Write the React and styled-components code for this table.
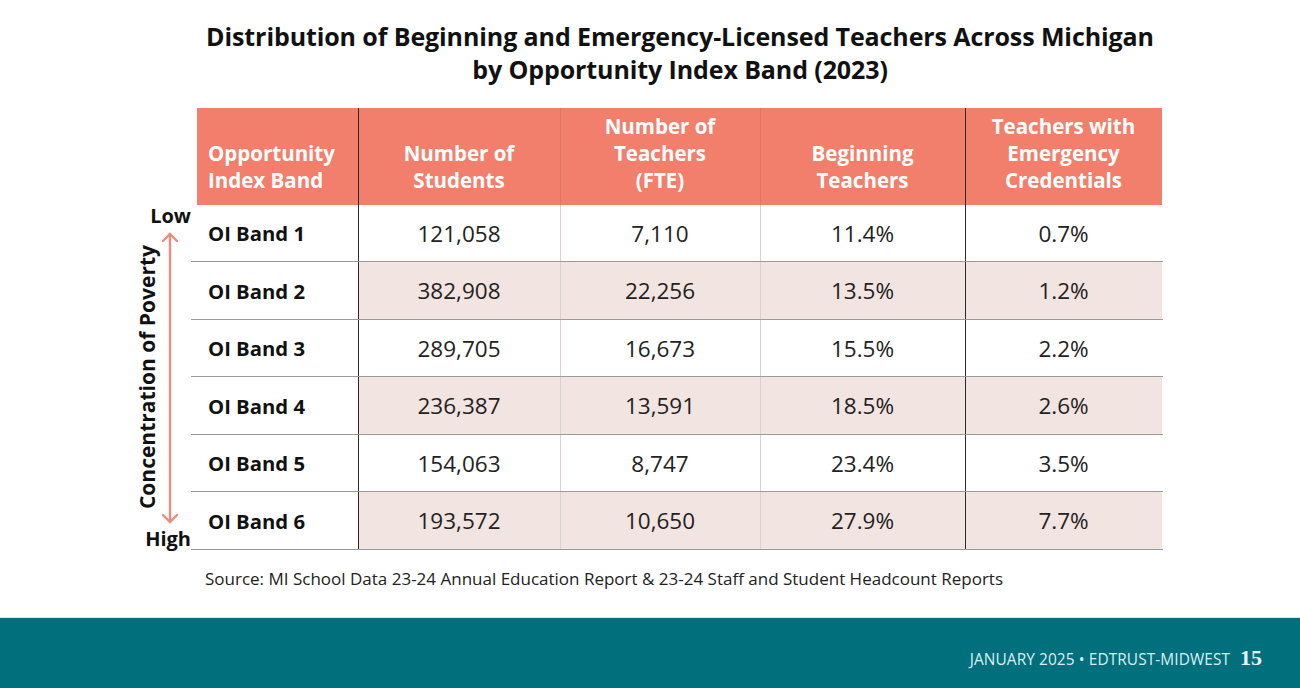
import React from 'react';
import styled, { createGlobalStyle } from 'styled-components';

const colors = {
  salmon: '#f27f6b',
  blush: '#f2e4e0',
  arrow: '#e98e7c',
  teal: '#02707c',
  ink: '#1a1a1a',
  rule: '#9b9b9b',
};

const rows = [
  ['OI Band 1', '121,058', '7,110', '11.4%', '0.7%'],
  ['OI Band 2', '382,908', '22,256', '13.5%', '1.2%'],
  ['OI Band 3', '289,705', '16,673', '15.5%', '2.2%'],
  ['OI Band 4', '236,387', '13,591', '18.5%', '2.6%'],
  ['OI Band 5', '154,063', '8,747', '23.4%', '3.5%'],
  ['OI Band 6', '193,572', '10,650', '27.9%', '7.7%'],
];

const headers = [
  ['Opportunity', 'Index Band'],
  ['Number of', 'Students'],
  ['Number of', 'Teachers', '(FTE)'],
  ['Beginning', 'Teachers'],
  ['Teachers with', 'Emergency', 'Credentials'],
];

const widths = [161, 202, 200, 205, 197];
const seps = ['dark', 'light', 'light', 'dark', null];

const App = () => {
  return (
    <>
      <GlobalStyle />
      <Page>
        <Main>
          <Title>
            Distribution of Beginning and Emergency-Licensed Teachers Across Michigan
            <br />
            by Opportunity Index Band (2023)
          </Title>
          <ChartRow>
            <Axis>
              <AxisEnd>Low</AxisEnd>
              <AxisMiddle>
                <AxisLabel>Concentration of Poverty</AxisLabel>
                <svg width="16" height="292" viewBox="0 0 16 292">
                  <g stroke={colors.arrow} strokeWidth="2.4" fill="none" strokeLinecap="round">
                    <line x1="8" y1="2" x2="8" y2="290" />
                    <polyline points="1,9 8,2 15,9" />
                    <polyline points="1,283 8,290 15,283" />
                  </g>
                </svg>
              </AxisMiddle>
              <AxisEnd>High</AxisEnd>
            </Axis>
            <Table>
              <colgroup>
                {widths.map((w, i) => (
                  <col key={i} style={{ width: w }} />
                ))}
              </colgroup>
              <thead>
                <tr>
                  {headers.map((lines, i) => (
                    <HeadCell key={i} $first={i === 0} $sep={seps[i]}>
                      {lines.map((l, j) => (
                        <div key={j}>{l}</div>
                      ))}
                    </HeadCell>
                  ))}
                </tr>
              </thead>
              <tbody>
                {rows.map((r, i) => (
                  <tr key={i}>
                    {r.map((v, j) =>
                      j === 0 ? (
                        <BandCell key={j} $sep={seps[j]}>{v}</BandCell>
                      ) : (
                        <Cell key={j} $shade={i % 2 === 1} $sep={seps[j]}>{v}</Cell>
                      )
                    )}
                  </tr>
                ))}
              </tbody>
            </Table>
          </ChartRow>
          <Source>
            Source: MI School Data 23-24 Annual Education Report &amp; 23-24 Staff and Student Headcount Reports
          </Source>
        </Main>
        <Footer>
          <FooterText>JANUARY 2025 • EDTRUST-MIDWEST</FooterText>
          <PageNumber>15</PageNumber>
        </Footer>
      </Page>
    </>
  );
};

export default App;

const GlobalStyle = createGlobalStyle`
  html, body {
    margin: 0;
    padding: 0;
    background: #ffffff;
  }
  body {
    font-family: "Open Sans", "Noto Sans", sans-serif;
    color: ${colors.ink};
  }
`;

const Page = styled.div`
  width: 1300px;
  height: 688px;
  display: flex;
  flex-direction: column;
  overflow: hidden;
`;

const Main = styled.div`
  height: 617px;
  display: flex;
  flex-direction: column;
  align-items: flex-start;
  border-bottom: 1px solid #c4eef0;
`;

const Title = styled.h1`
  margin: 20px 0 0;
  width: 100%;
  padding-left: 60px;
  box-sizing: border-box;
  text-align: center;
  font-size: 25px;
  line-height: 33px;
  font-weight: 700;
  letter-spacing: -0.1px;
  color: #111;
`;

const ChartRow = styled.div`
  display: flex;
  margin-top: 22px;
  padding-left: 128px;
`;

const Axis = styled.div`
  width: 63px;
  margin-top: 97px;
  height: 345px;
  display: flex;
  flex-direction: column;
  align-items: flex-end;
  justify-content: space-between;
`;

const AxisEnd = styled.div`
  font-size: 20px;
  font-weight: 700;
  line-height: 22px;
  color: #111;
`;

const AxisMiddle = styled.div`
  display: flex;
  align-items: center;
  gap: 2px;
  margin-right: 13px;
  margin-top: -6px;
  margin-bottom: -6px;
`;

const AxisLabel = styled.div`
  writing-mode: vertical-rl;
  transform: rotate(180deg);
  font-size: 21px;
  font-weight: 700;
  line-height: 26px;
  color: #111;
  white-space: nowrap;
`;

const Table = styled.table`
  margin-left: 6px;
  border-collapse: collapse;
  table-layout: fixed;
  width: 965px;
`;

const sepColor = (sep, head) => {
  if (sep === 'dark') return '#2a2a2a';
  if (sep === 'light') return head ? '#e07463' : '#d9d2d0';
  return 'transparent';
};

const HeadCell = styled.th`
  height: 97px;
  padding: 0 0 11px ${(p) => (p.$first ? '11px' : '0')};
  box-sizing: border-box;
  vertical-align: bottom;
  text-align: ${(p) => (p.$first ? 'left' : 'center')};
  background: ${colors.salmon};
  color: #ffffff;
  font-size: 20.5px;
  font-weight: 700;
  line-height: 27px;
  border-right: 1px solid ${(p) => sepColor(p.$sep, true)};
`;

const Cell = styled.td`
  height: 56px;
  padding: 0;
  text-align: center;
  font-size: 22.5px;
  color: #222;
  background: ${(p) => (p.$shade ? colors.blush : '#ffffff')};
  border-bottom: 1px solid ${colors.rule};
  border-right: 1px solid ${(p) => sepColor(p.$sep, false)};
`;

const BandCell = styled.td`
  position: relative;
  height: 56px;
  padding: 0 0 0 11px;
  font-size: 20.3px;
  font-weight: 700;
  color: #111;
  background: #ffffff;
  border-bottom: 1px solid ${colors.rule};
  border-right: 1px solid ${(p) => sepColor(p.$sep, false)};

  &::after {
    content: '';
    position: absolute;
    left: -6px;
    bottom: -1px;
    width: 6px;
    height: 1px;
    background: ${colors.rule};
  }
`;

const Source = styled.p`
  margin: 17px 0 0 205px;
  font-size: 17px;
  color: #222;
`;

const Footer = styled.footer`
  flex: 1;
  background: ${colors.teal};
  display: flex;
  justify-content: flex-end;
  align-items: baseline;
  gap: 10px;
  padding: 27px 38px 0 0;
  box-sizing: border-box;
`;

const FooterText = styled.span`
  font-size: 15.4px;
  color: #d9eff1;
  letter-spacing: 0.1px;
`;

const PageNumber = styled.span`
  font-family: "Liberation Serif", "DejaVu Serif", serif;
  font-size: 22px;
  font-weight: 700;
  color: #e6f5f6;
`;
